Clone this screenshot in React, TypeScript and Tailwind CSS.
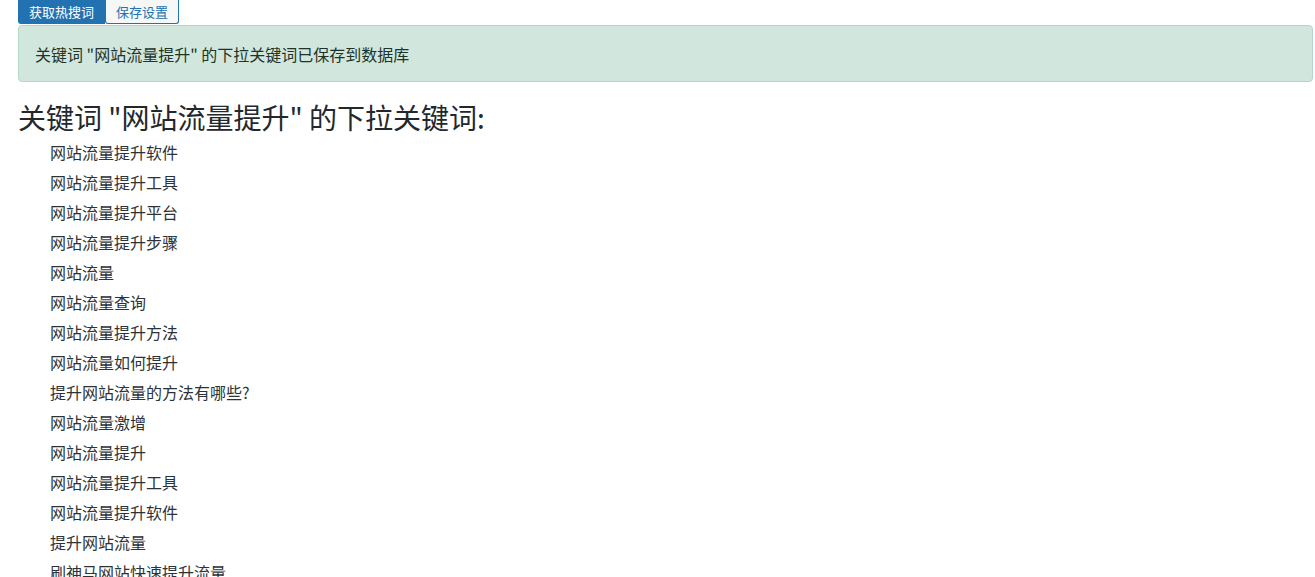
const KEYWORDS = [
  "网站流量提升软件",
  "网站流量提升工具",
  "网站流量提升平台",
  "网站流量提升步骤",
  "网站流量",
  "网站流量查询",
  "网站流量提升方法",
  "网站流量如何提升",
  "提升网站流量的方法有哪些?",
  "网站流量激增",
  "网站流量提升",
  "网站流量提升工具",
  "网站流量提升软件",
  "提升网站流量",
  "刷神马网站快速提升流量",
];

export default function App() {
  return (
    <div
      className="min-h-[577px] bg-white pl-[18px] pr-[2px] overflow-hidden"
      style={{ fontFamily: '"Noto Sans CJK SC", "Noto Sans", sans-serif' }}
    >
      {/* tabs */}
      <div className="flex">
        <button className="h-[24px] w-[87px] bg-[#2271b1] text-white text-[13px] leading-[22px] rounded-bl-[3px]">
          获取热搜词
        </button>
        <button className="h-[24px] w-[74px] bg-[#f6f7f7] text-[#2271b1] text-[13px] leading-[22px] border border-t-0 border-[#2271b1] rounded-b-[3px]">
          保存设置
        </button>
      </div>

      <div className="mt-px h-[57px] flex items-center px-[16px] bg-[#d1e7dd] border border-[#b4d6c7] rounded-[4px] text-[16px] text-[#1e3329]">
        关键词 "网站流量提升" 的下拉关键词已保存到数据库
      </div>

      <h2 className="mt-[18px] text-[28px] leading-[34px] text-[#23282d]">
        关键词 "网站流量提升" 的下拉关键词:
      </h2>

      <ul className="mt-[3px] pl-[32px]">
        {KEYWORDS.map((k, i) => (
          <li key={i} className="h-[30px] leading-[30px] text-[16px] text-[#2c3338]">
            {k}
          </li>
        ))}
      </ul>
    </div>
  );
}
